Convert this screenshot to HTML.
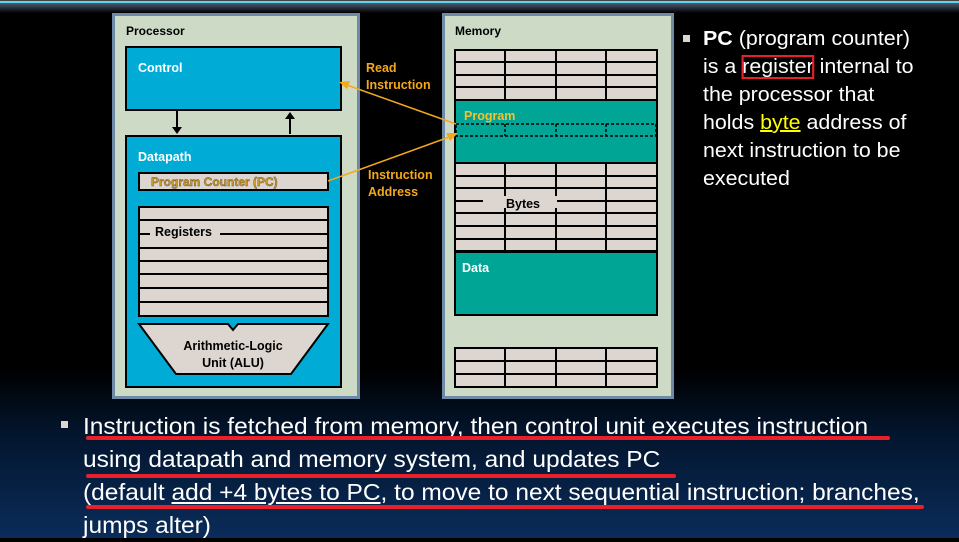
<!DOCTYPE html>
<html><head><meta charset="utf-8"><style>
html,body{margin:0;padding:0}
body{width:959px;height:538px;overflow:hidden;position:relative;background:linear-gradient(180deg,#000 0px,#000 370px,#03142c 430px,#0a2c5a 538px);font-family:"Liberation Sans",sans-serif}
.t{position:absolute;color:#fff;white-space:nowrap}
.r{font-size:20px;left:703px;transform-origin:0 0;transform:scaleX(1.07);line-height:28px}
.b{font-size:23px;left:83px;transform-origin:0 0;transform:scaleX(1.065);line-height:33px}
.ul{position:absolute;height:4px;background:#e8202a;border-radius:2px}
</style></head><body>
<div style="position:absolute;left:0;top:0;width:959px;height:1px;background:#444"></div>
<div style="position:absolute;left:0;top:1px;width:959px;height:2px;background:#5fd3ea"></div>
<div style="position:absolute;left:0;top:3px;width:959px;height:10px;background:linear-gradient(#4c5c74,#000)"></div>
<svg width="959" height="538" style="position:absolute;left:0;top:0" xmlns="http://www.w3.org/2000/svg" font-family="Liberation Sans, sans-serif" font-weight="bold">
<rect x="113.5" y="14.5" width="245" height="383" fill="#cddbc6" stroke="#6f8aa6" stroke-width="3"/>
<text x="126" y="35" font-size="12" fill="#000">Processor</text>
<rect x="126" y="47" width="215" height="63" fill="#00acd6" stroke="#000" stroke-width="2"/>
<text x="138" y="72" font-size="12.5" fill="#fff">Control</text>
<line x1="177" y1="111" x2="177" y2="130" stroke="#000" stroke-width="2"/><polygon points="172,127 182,127 177,134" fill="#000"/>
<line x1="290" y1="134" x2="290" y2="116" stroke="#000" stroke-width="2"/><polygon points="285,119 295,119 290,112" fill="#000"/>
<rect x="126" y="136" width="215" height="251" fill="#00acd6" stroke="#000" stroke-width="2"/>
<text x="138" y="161" font-size="12.5" fill="#fff">Datapath</text>
<rect x="139" y="173" width="189" height="17" fill="#dcd5d0" stroke="#000" stroke-width="2"/>
<text x="151" y="186" font-size="12" fill="#c99a2e" stroke="#6b5020" stroke-width="0.4">Program Counter (PC)</text>
<rect x="139" y="207" width="189" height="109" fill="#dcd5d0" stroke="#000" stroke-width="2"/>
<g stroke="#000" stroke-width="2">
<line x1="139" y1="220" x2="328" y2="220"/><line x1="139" y1="234" x2="150" y2="234"/><line x1="220" y1="234" x2="328" y2="234"/>
<line x1="139" y1="248" x2="328" y2="248"/><line x1="139" y1="261" x2="328" y2="261"/><line x1="139" y1="274" x2="328" y2="274"/>
<line x1="139" y1="288" x2="328" y2="288"/><line x1="139" y1="302" x2="328" y2="302"/></g>
<text x="155" y="236" font-size="12.5" fill="#000">Registers</text>
<polygon points="139,324 228,324 233,330 238,324 328,324 291,374 176,374" fill="#dcd5d0" stroke="#000" stroke-width="2"/>
<text x="233" y="350" font-size="12.5" fill="#000" text-anchor="middle">Arithmetic-Logic</text>
<text x="233" y="367" font-size="12.5" fill="#000" text-anchor="middle">Unit (ALU)</text>
<rect x="443.5" y="14.5" width="229" height="383" fill="#cddbc6" stroke="#6f8aa6" stroke-width="3"/>
<text x="455" y="35" font-size="12" fill="#000">Memory</text>
<g fill="#dcd5d0" stroke="#000" stroke-width="2">
<rect x="455" y="50" width="202" height="50"/><rect x="455" y="163" width="202" height="88"/><rect x="455" y="348" width="202" height="39"/></g>
<g stroke="#000" stroke-width="2">
<line x1="455" y1="62" x2="657" y2="62"/><line x1="455" y1="75" x2="657" y2="75"/><line x1="455" y1="87" x2="657" y2="87"/>
<line x1="455" y1="176" x2="657" y2="176"/><line x1="455" y1="188" x2="657" y2="188"/>
<line x1="606" y1="201" x2="657" y2="201"/>
<line x1="455" y1="213" x2="657" y2="213"/><line x1="455" y1="226" x2="657" y2="226"/><line x1="455" y1="239" x2="657" y2="239"/>
<line x1="455" y1="361" x2="657" y2="361"/><line x1="455" y1="374" x2="657" y2="374"/>
<line x1="505" y1="50" x2="505" y2="100"/><line x1="556" y1="50" x2="556" y2="100"/><line x1="606" y1="50" x2="606" y2="100"/>
<line x1="505" y1="163" x2="505" y2="251"/><line x1="556" y1="163" x2="556" y2="251"/><line x1="606" y1="163" x2="606" y2="251"/>
<line x1="505" y1="348" x2="505" y2="387"/><line x1="556" y1="348" x2="556" y2="387"/><line x1="606" y1="348" x2="606" y2="387"/></g>
<line x1="455" y1="201" x2="606" y2="201" stroke="#000" stroke-width="2"/>
<rect x="483" y="196" width="74" height="12" fill="#dcd5d0"/>
<text x="523" y="208" font-size="12.5" fill="#000" text-anchor="middle">Bytes</text>
<rect x="455" y="100" width="202" height="63" fill="#00a596" stroke="#000" stroke-width="2"/>
<g stroke="#000" stroke-width="1.5" stroke-dasharray="3,2" fill="none">
<rect x="456" y="124" width="200" height="12"/><line x1="505" y1="124" x2="505" y2="136"/><line x1="556" y1="124" x2="556" y2="136"/><line x1="606" y1="124" x2="606" y2="136"/></g>
<text x="464" y="120" font-size="12.5" fill="#f4c030">Program</text>
<rect x="455" y="252" width="202" height="63" fill="#00a596" stroke="#000" stroke-width="2"/>
<text x="462" y="272" font-size="12.5" fill="#fff">Data</text>
<g stroke="#f4a81c" stroke-width="1.5">
<line x1="456" y1="124" x2="344" y2="84"/><line x1="328" y1="181" x2="452" y2="136"/></g>
<polygon points="339,82 350,81 347,89" fill="#f4a81c"/>
<polygon points="458,133 446,133 450,141" fill="#f4a81c"/>
<g font-size="12.5" fill="#f4a81c">
<text x="366" y="72">Read</text><text x="366" y="89">Instruction</text>
<text x="368" y="179">Instruction</text><text x="368" y="196">Address</text></g>
</svg>
<div style="position:absolute;left:683px;top:35px;width:7px;height:7px;background:#ddd6cc"></div>
<div class="t r" style="top:25px"><b>PC</b> (program counter)</div>
<div class="t r" style="top:53px">is a <span style="outline:2px solid #e8202a;outline-offset:-1px">register</span> internal to</div>
<div class="t r" style="top:81px">the processor that</div>
<div class="t r" style="top:109px">holds <span style="color:#ffff00;text-decoration:underline">byte</span> address of</div>
<div class="t r" style="top:137px">next instruction to be</div>
<div class="t r" style="top:165px">executed</div>
<div style="position:absolute;left:61px;top:421px;width:7px;height:7px;background:#ddd6cc"></div>
<div class="t b" style="top:410px">Instruction is fetched from memory, then control unit executes instruction</div>
<div class="t b" style="top:443px">using datapath and memory system, and updates PC</div>
<div class="t b" style="top:476px">(default <span style="text-decoration:underline">add +4 bytes to PC</span>, to move to next sequential instruction; branches,</div>
<div class="t b" style="top:509px">jumps alter)</div>
<div class="ul" style="left:86px;top:436px;width:804px"></div>
<div class="ul" style="left:86px;top:474px;width:590px"></div>
<div class="ul" style="left:86px;top:505px;width:838px"></div>
</body></html>
